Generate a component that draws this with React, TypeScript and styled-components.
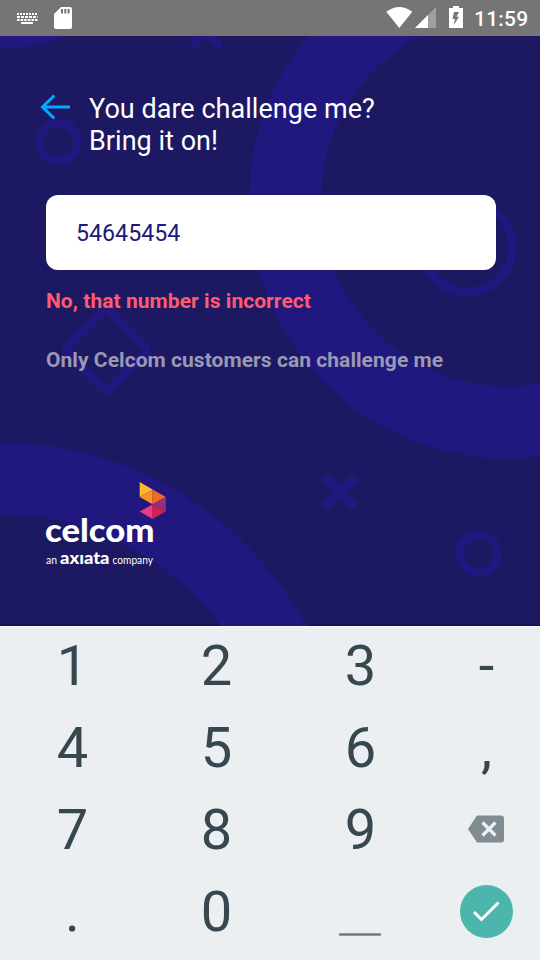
import React from "react";
import styled, { createGlobalStyle } from "styled-components";

const GlobalStyle = createGlobalStyle`
  * { box-sizing: border-box; }
  body { margin: 0; font-family: Roboto, sans-serif; background: #1c1861; }
  button { border: 0; padding: 0; background: none; font: inherit; color: inherit; }
`;

const Screen = styled.div`
  width: 540px;
  height: 960px;
  display: flex;
  flex-direction: column;
  overflow: hidden;
`;

const StatusBar = styled.header`
  height: 36px;
  flex: none;
  display: flex;
  justify-content: space-between;
  background: #757575;
  color: #fff;
`;

const StatusGroup = styled.div`
  display: flex;
`;

const Clock = styled.span`
  width: 70px;
  padding-left: 4px;
  font-size: 21px;
  font-weight: 500;
  line-height: 38px;
  letter-spacing: 0.2px;
  white-space: nowrap;
`;

const Page = styled.main`
  position: relative;
  height: 590px;
  flex: none;
  padding: 56px 44px 0 40px;
  overflow: hidden;
  background: #1c1861;
  box-shadow: inset 0 -2px 2px -1px rgba(0, 0, 0, 0.35);
`;

const Backdrop = styled.svg`
  position: absolute;
  inset: 0;
  stroke: #20187e;
  fill: none;
`;

const Content = styled.div`
  position: relative;
  display: flex;
  flex-direction: column;
`;

const Heading = styled.div`
  display: flex;
  height: 103px;
`;

const BackButton = styled.button`
  width: 49px;
  height: 30px;
  display: flex;
`;

const Title = styled.h1`
  margin: 0;
  padding-top: 1px;
  color: #fff;
  font-size: 27px;
  font-weight: 400;
  line-height: 32px;
  letter-spacing: 0.03px;
`;

const NumberInput = styled.input`
  height: 75px;
  margin-left: 6px;
  padding: 1px 30px 0;
  border: 0;
  border-radius: 12px;
  outline: 0;
  background: #fff;
  color: #20187a;
  font: 400 23.2px/74px Roboto, sans-serif;
`;

const Message = styled.p<{ $tone: "error" | "hint" }>`
  margin: ${(p) => (p.$tone === "error" ? "19px" : "35px")} 0 0 6px;
  color: ${(p) => (p.$tone === "error" ? "#ff5a6e" : "#9b98b5")};
  font-size: 21px;
  font-weight: 700;
  line-height: 24px;
  letter-spacing: 0.05px;
  white-space: nowrap;
`;

const Logo = styled.svg`
  margin: 104px 0 0 0;
  font-family: Lato, sans-serif;
  fill: #fff;
`;

const Keypad = styled.section`
  flex: 1;
  display: grid;
  grid-template-columns: 144px 144px 144px 108px;
  grid-auto-rows: 82px;
  border-top: 1px solid #fafbfc;
  background: #ebeff2;
  color: #37474f;
`;

const Key = styled.button`
  display: flex;
  align-items: center;
  justify-content: center;
  padding: 0 0 4px 1px;
  font-size: 56px;
  line-height: 78px;
`;

const EnterCircle = styled.span`
  width: 53px;
  height: 53px;
  border-radius: 50%;
  display: flex;
  margin-bottom: 2px;
  background: #4db6ac;
`;

const KeyboardIcon = () => (
  <svg width="48" height="36" fill="none" stroke="#fff">
    <path d="M17 14h20.500" strokeWidth="2" strokeDasharray="2 1" />
    <path d="M17 17h20.500" strokeWidth="2" strokeDasharray="3 1" />
    <path d="M17 20h20.500" strokeWidth="2" strokeDasharray="2.600 1" />
    <path d="M21 23h12" strokeWidth="2" />
  </svg>
);

const SdCardIcon = () => (
  <svg width="32" height="36">
    <path
      fill="#fff"
      fillRule="evenodd"
      d="M13 7h9q2 0 2 2v18q0 2-2 2H8q-2 0-2-2V14ZM13 9v4.500h2V9Zm3.300 0v4.500h2V9Zm3.300 0v4.500h2V9Z"
    />
  </svg>
);

const WifiIcon = () => (
  <svg width="29" height="36">
    <path fill="#fff" d="M0.300 11.800Q13.300 2.300 26.300 11.800L13.300 28Z" />
  </svg>
);

const SignalIcon = () => (
  <svg width="34" height="36">
    <path fill="#a0a0a0" d="M21 7v21H0Z" />
    <path fill="#fff" d="M13 15v13H0Z" />
  </svg>
);

const BatteryIcon = () => (
  <svg width="21" height="36">
    <path
      fill="#fff"
      fillRule="evenodd"
      d="M4 6h6v2h4v20H0V8h4ZM5 12 3.500 19h2.500L4.700 25.200 10 16.800H7.500L10 12Z"
    />
  </svg>
);

const BackArrow = () => (
  <svg width="32" height="30" fill="none" stroke="#00aaff" strokeWidth="3">
    <path d="M30 15H2M14.300 3.500 2.500 15 14.300 26.500" />
  </svg>
);

const Shapes = () => (
  <Backdrop width="540" height="590" viewBox="0 36 540 590">
    <circle cx="507" cy="200.500" r="222" strokeWidth="72.400" />
    <circle cx="-1.500" cy="792" r="313.800" strokeWidth="72.400" />
    <circle cx="7" cy="-103" r="115" strokeWidth="72" />
    <circle cx="467.500" cy="247" r="44.700" strokeWidth="8.600" />
    <circle cx="58.300" cy="142" r="19" strokeWidth="8.600" />
    <circle cx="478.700" cy="553.500" r="19" strokeWidth="8.600" />
    <rect x="76.500" y="320.300" width="59.400" height="59.400" rx="4" strokeWidth="8.600" transform="rotate(45 106.200 350)" />
    <path strokeWidth="9" strokeLinecap="round" d="m328 480 24 24m0-24-24 24M194.500 20l23.500 24m0-24-23.500 24" />
  </Backdrop>
);

const CelcomLogo = () => (
  <Logo width="130" height="100" viewBox="40 476 130 100" role="img" aria-label="celcom">
    <path fill="#fdb62f" d="M139.700 482 152.600 489.500 139.700 497Z" />
    <path fill="#f7941e" d="M139.700 497 152.600 489.500V504.300Z" />
    <path fill="#f26a25" d="M152.600 489.500 165.800 497 152.600 504.300Z" />
    <path fill="#92307d" d="M165.800 497V511.500L152.600 504.300Z" />
    <path fill="#ee3a84" d="M152.600 504.300V519L139.700 511.500Z" />
    <path fill="#d3204f" d="M152.600 504.300 165.800 511.500 152.600 519Z" />
    <text x="45" y="541.700" fontSize="33" fontWeight="900" textLength="109.500" lengthAdjust="spacingAndGlyphs">celcom</text>
    <text x="46" y="564.300" fontSize="10.500" textLength="11" lengthAdjust="spacingAndGlyphs">an</text>
    <text x="60" y="564.300" fontSize="17" fontWeight="900" textLength="49.500" lengthAdjust="spacingAndGlyphs">axıata</text>
    <text x="112.500" y="564.300" fontSize="10.500" textLength="40.500" lengthAdjust="spacingAndGlyphs">company</text>
  </Logo>
);

const DeleteIcon = () => (
  <svg width="40" height="32" viewBox="0 0 40 32">
    <path fill="#808c91" d="M10 1.500h24q3 0 3 3v21q0 3-3 3H10L1 15Z" />
    <path stroke="#ebeff2" strokeWidth="3.200" d="m15.500 8.500 13 13m0-13-13 13" />
  </svg>
);

const CheckIcon = () => (
  <svg width="53" height="53" fill="none" stroke="#fff" strokeWidth="3">
    <path d="m14 27 7.500 7.500L38.500 17.500" />
  </svg>
);

const SpaceIcon = () => (
  <svg width="44" height="50">
    <path stroke="#6c7b7e" strokeWidth="2.500" d="M0 47.500h42" />
  </svg>
);

const keys: { id: string; face: React.ReactNode }[] = [
  ..."123-456,789".split("").map((c) => ({ id: c, face: c })),
  { id: "delete", face: <DeleteIcon /> },
  { id: ".", face: "." },
  { id: "0", face: "0" },
  { id: "space", face: <SpaceIcon /> },
  { id: "enter", face: <EnterCircle><CheckIcon /></EnterCircle> },
];

export default function App() {
  return (
    <Screen>
      <GlobalStyle />
      <StatusBar>
        <StatusGroup>
          <KeyboardIcon />
          <SdCardIcon />
        </StatusGroup>
        <StatusGroup>
          <WifiIcon />
          <SignalIcon />
          <BatteryIcon />
          <Clock>11:59</Clock>
        </StatusGroup>
      </StatusBar>
      <Page>
        <Shapes />
        <Content>
          <Heading>
            <BackButton aria-label="Back"><BackArrow /></BackButton>
            <Title>You dare challenge me?<br />Bring it on!</Title>
          </Heading>
          <NumberInput defaultValue="54645454" inputMode="numeric" />
          <Message $tone="error">No, that number is incorrect</Message>
          <Message $tone="hint">Only Celcom customers can challenge me</Message>
          <CelcomLogo />
        </Content>
      </Page>
      <Keypad>
        {keys.map((key) => (
          <Key key={key.id} aria-label={key.id}>{key.face}</Key>
        ))}
      </Keypad>
    </Screen>
  );
}
